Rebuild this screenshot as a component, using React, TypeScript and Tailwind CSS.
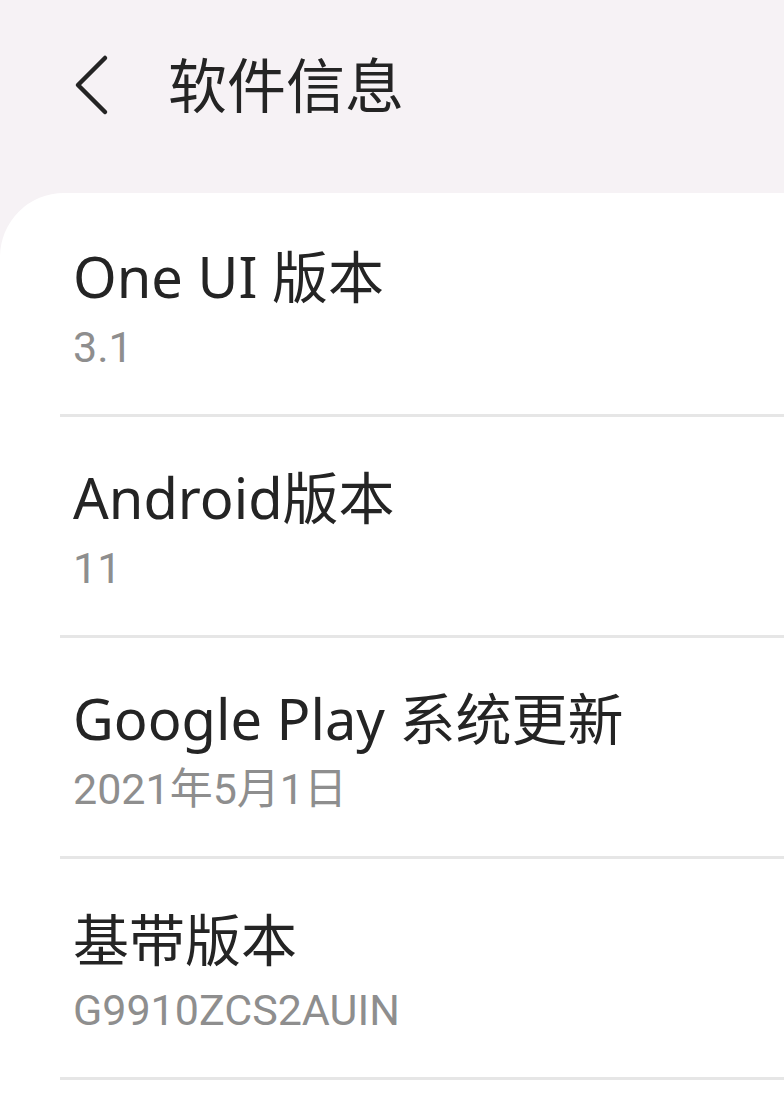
const items = [
  { title: "One UI 版本", value: "3.1" },
  { title: "Android版本", value: "11" },
  { title: "Google Play 系统更新", value: "2021年5月1日" },
  { title: "基带版本", value: "G9910ZCS2AUIN" },
];

export default function App() {
  return (
    <div
      className="w-[784px] h-[1100px] overflow-hidden bg-[#f6f2f5] text-[#242424]"
      style={{ fontFamily: '"Noto Sans", "Noto Sans CJK SC", sans-serif' }}
    >
      {/* header */}
      <div className="h-[193px] flex items-start pt-[52px] pl-[72px]">
        <svg width="44" height="66" viewBox="0 0 44 66">
          <path d="M33 6 L6 33 L33 60" fill="none" stroke="#242424" strokeWidth="4.5" strokeLinecap="round" strokeLinejoin="round" />
        </svg>
        <h1 className="ml-[52px] -mt-[1px] text-[59px] leading-[68px]">软件信息</h1>
      </div>

      {/* list card */}
      <div className="bg-white rounded-tl-[64px] pl-[60px] pt-[3px] min-h-[907px]">
        {items.map((item) => (
          <div key={item.title} className="pt-[48px] pb-[43px] border-b-[3px] border-[#e6e6e6]">
            <div className="pl-[13px] text-[56px] leading-[64px]">{item.title}</div>
            <div
              className="pl-[13px] mt-[15px] text-[43px] leading-[48px] text-[#8e8e8e]"
              style={{ fontFamily: 'Roboto, "Noto Sans CJK SC", sans-serif' }}
            >
              {item.value}
            </div>
          </div>
        ))}
      </div>
    </div>
  );
}
